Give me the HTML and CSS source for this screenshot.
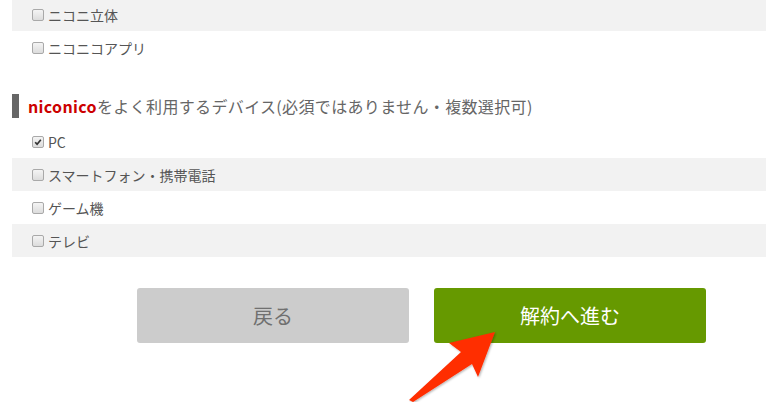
FILE: index.html
```html
<!DOCTYPE html>
<html lang="ja">
<head>
<meta charset="utf-8">
<link rel="stylesheet" href="styles.css">
</head>
<body>
<div class="page">
  <ul class="list list-top">
    <li class="row shade"><span class="cb"></span><span class="label">ニコニ立体</span></li>
    <li class="row"><span class="cb"></span><span class="label">ニコニコアプリ</span></li>
  </ul>

  <h2 class="heading"><span class="brand">niconico</span>をよく利用するデバイス(必須ではありません・複数選択可)</h2>

  <ul class="list">
    <li class="row"><span class="cb checked"><svg viewBox="0 0 12 12" width="12" height="12"><path d="M2.6 6.3 L4.9 8.6 L9.4 3.2" fill="none" stroke="#333" stroke-width="2"/></svg></span><span class="label">PC</span></li>
    <li class="row shade"><span class="cb"></span><span class="label">スマートフォン・携帯電話</span></li>
    <li class="row"><span class="cb"></span><span class="label">ゲーム機</span></li>
    <li class="row shade"><span class="cb"></span><span class="label">テレビ</span></li>
  </ul>

  <div class="actions">
    <button class="btn btn-back">戻る</button>
    <button class="btn btn-next">解約へ進む</button>
  </div>
</div>

<svg class="arrow" width="766" height="402" viewBox="0 0 766 402">
  <defs>
    <filter id="sh" x="-20%" y="-20%" width="140%" height="140%">
      <feDropShadow dx="1" dy="1" stdDeviation="1" flood-color="#000" flood-opacity="0.3"/>
    </filter>
  </defs>
  <polygon points="495,332 449,343 461,352 409,400 413,402 472,364 478,377" fill="#ff2d00" filter="url(#sh)"/>
</svg>
</body>
</html>
```

FILE: styles.css
```css
* { box-sizing: border-box; }
html, body { margin: 0; padding: 0; }
body {
  width: 766px;
  height: 402px;
  overflow: hidden;
  background: #fff;
  font-family: "Noto Sans CJK JP", "Noto Sans", sans-serif;
  color: #555;
  position: relative;
}
.page {
  padding-left: 12px;
}
.list {
  list-style: none;
  margin: 0;
  padding: 0;
}
.list-top {
  margin-top: -2px;
}
.row {
  height: 33px;
  display: flex;
  align-items: center;
  padding-left: 20px;
  font-size: 14px;
  line-height: 1;
}
.shade { background: #f2f2f2; }
.cb {
  width: 12px;
  height: 12px;
  border: 1px solid #a9a9a9;
  border-radius: 2px;
  background: linear-gradient(#f4f4f4, #dcdcdc);
  margin-right: 4px;
  flex: none;
  display: flex;
  align-items: center;
  justify-content: center;
}
.cb svg { display: block; }
.label { color: #555; }
.heading {
  margin: 30px 0 7px 0;
  height: 24px;
  border-left: 7px solid #666;
  padding-left: 9px;
  font-size: 16px;
  font-weight: normal;
  line-height: 24px;
  color: #666;
  letter-spacing: 0.35px;
}
.brand {
  color: #cc0000;
  font-weight: bold;
}
.actions {
  display: flex;
  gap: 25px;
  margin-top: 31px;
  padding-left: 125px;
}
.btn {
  width: 272px;
  height: 55px;
  border: none;
  border-radius: 3px;
  font-family: "Noto Sans CJK JP", "Noto Sans", sans-serif;
  font-size: 20px;
  padding: 0;
}
.btn-back {
  background: #cccccc;
  color: #707070;
}
.btn-next {
  background: #669900;
  color: #fff;
}
.arrow {
  position: absolute;
  left: 0;
  top: 0;
  pointer-events: none;
}
```
